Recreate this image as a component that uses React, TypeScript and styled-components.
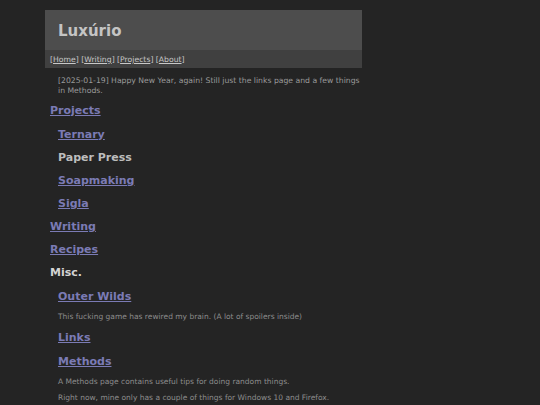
import styled, { createGlobalStyle } from "styled-components";

const GlobalStyle = createGlobalStyle`
	html, body {
		margin: 0;
		padding: 0;
		background-color: #242424;
	}
	body {
		font-family: "DejaVu Sans", Verdana, sans-serif;
	}
`;

const Page = styled.div`
	width: 317px;
	margin: 10px 0 0 45px;
`;

const Header = styled.header`
	height: 40px;
	box-sizing: border-box;
	display: flex;
	align-items: center;
	padding: 3px 0 0 13px;
	background-color: #4d4d4d;
`;

const Title = styled.h1`
	margin: 0;
	font-size: 15px;
	font-weight: bold;
	color: #c4c4c4;
	line-height: 1;
`;

const Nav = styled.nav`
	height: 18px;
	line-height: 19px;
	padding-left: 5px;
	background-color: #404040;
	font-size: 7.7px;
	color: #c8c8c8;
	white-space: nowrap;
`;

const NavLink = styled.a`
	color: #c8c8c8;
	text-decoration: underline;
`;

const Main = styled.main`
	padding-left: 5px;
`;

const Section = styled.div`
	padding-left: 8px;
`;

const Intro = styled.p`
	margin: 8px 0 0 8px;
	font-size: 7.7px;
	line-height: 10px;
	color: #9a9a9a;
`;

const Heading = styled.h2<{ $top?: number; $plain?: string }>`
	margin: ${(p) => p.$top ?? 10}px 0 0;
	font-size: 11px;
	font-weight: bold;
	line-height: 13px;
	color: ${(p) => p.$plain ?? "#7b7bb5"};

	a {
		color: #7b7bb5;
		text-decoration: underline;
	}
`;

const Note = styled.p<{ $top?: number }>`
	margin: ${(p) => p.$top ?? 9}px 0 0;
	font-size: 7.5px;
	line-height: 10px;
	color: #8c8c8c;
`;

const App = () => {
	return (
		<>
			<GlobalStyle />
			<Page>
				<Header>
					<Title>Luxúrio</Title>
				</Header>
				<Nav>
					[<NavLink href="#">Home</NavLink>] [<NavLink href="#">Writing</NavLink>] [
					<NavLink href="#">Projects</NavLink>] [<NavLink href="#">About</NavLink>]
				</Nav>
				<Main>
					<Intro>
						[2025-01-19] Happy New Year, again! Still just the links page and a few things
						in Methods.
					</Intro>
					<Heading $top={8}>
						<a href="#">Projects</a>
					</Heading>
					<Section>
						<Heading $top={11}>
							<a href="#">Ternary</a>
						</Heading>
						<Heading $plain="#bdbdbd">Paper Press</Heading>
						<Heading>
							<a href="#">Soapmaking</a>
						</Heading>
						<Heading>
							<a href="#">Sigla</a>
						</Heading>
					</Section>
					<Heading>
						<a href="#">Writing</a>
					</Heading>
					<Heading>
						<a href="#">Recipes</a>
					</Heading>
					<Heading $plain="#d4d4d4">Misc.</Heading>
					<Section>
						<Heading $top={11}>
							<a href="#">Outer Wilds</a>
						</Heading>
						<Note>This fucking game has rewired my brain. (A lot of spoilers inside)</Note>
						<Heading $top={9}>
							<a href="#">Links</a>
						</Heading>
						<Heading $top={11}>
							<a href="#">Methods</a>
						</Heading>
						<Note $top={9}>A Methods page contains useful tips for doing random things.</Note>
						<Note $top={6}>Right now, mine only has a couple of things for Windows 10 and Firefox.</Note>
					</Section>
				</Main>
			</Page>
		</>
	);
};

export default App;
